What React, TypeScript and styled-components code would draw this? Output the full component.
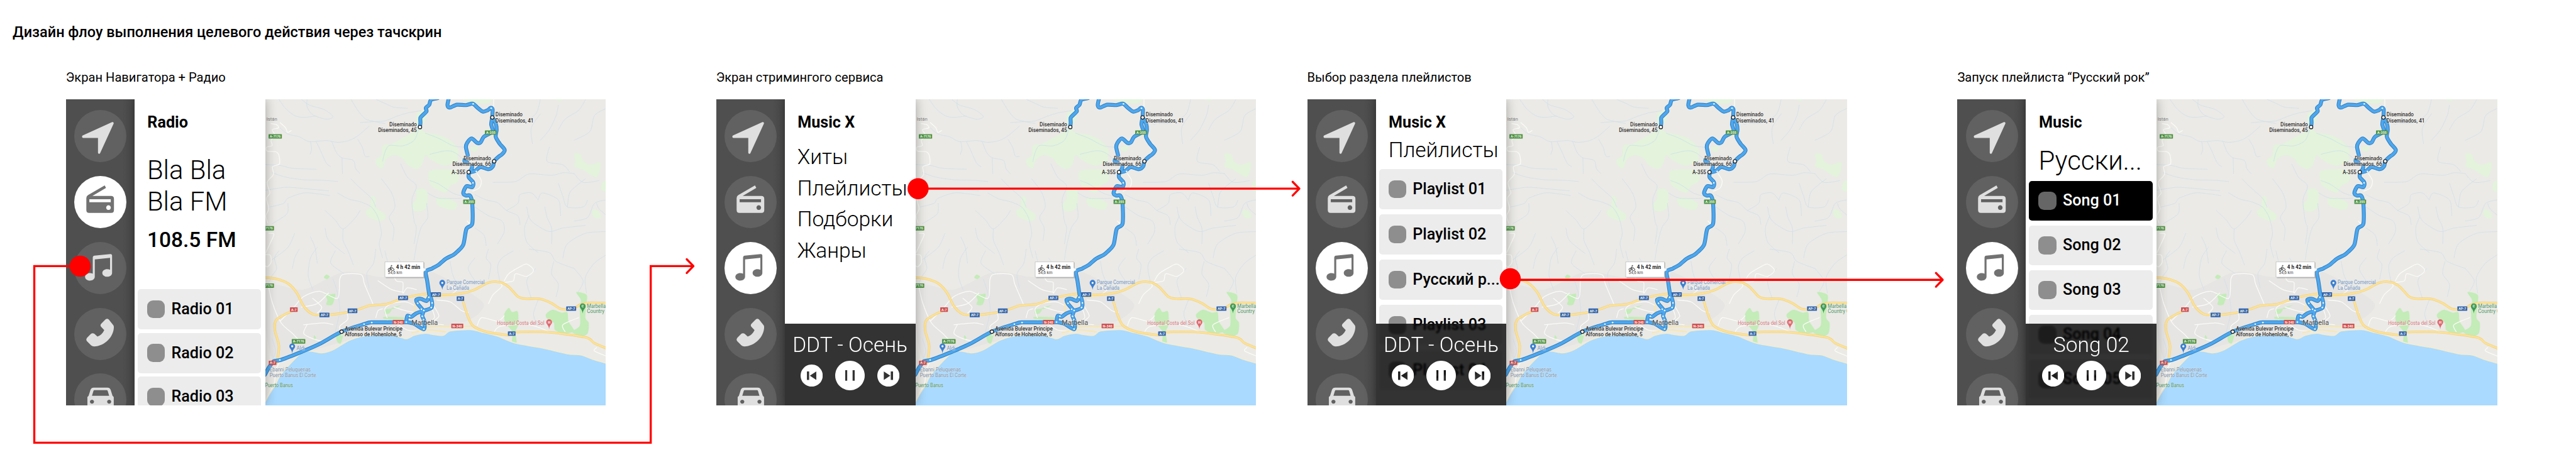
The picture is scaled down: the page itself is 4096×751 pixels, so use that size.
import React from "react";
import styled, { createGlobalStyle, css } from "styled-components";

const GlobalStyle = createGlobalStyle`
  html, body { margin: 0; padding: 0; background: #fff; overflow: hidden; }
  * { box-sizing: border-box; }
`;

/* ---------- board ---------- */

const Board = styled.main`
  position: relative;
  zoom: 0.838485;
  width: 4885px;
  height: 895.6px;
  padding-top: 44.3px;
  overflow: hidden;
  background: #fff;
  color: #000;
  font-family: Roboto, "Liberation Sans", sans-serif;
`;

const BoardTitle = styled.h1`
  margin: 0 0 53.5px 24px;
  font-size: 28px;
  line-height: 34px;
  font-weight: 500;
`;

const Flow = styled.div`
  display: flex;
  padding-left: 125px;
`;

const Step = styled.section<{ $before?: number }>`
  flex: none;
  width: 1024px;
  margin-left: ${(p) => p.$before ?? 0}px;
`;

const Caption = styled.h2`
  margin: 0 0 27.2px;
  font-size: 24px;
  line-height: 30px;
  font-weight: 400;
  white-space: nowrap;
`;

const Screen = styled.div`
  display: flex;
  height: 580px;
  overflow: hidden;
`;

/* ---------- sidebar ---------- */

const Sidebar = styled.nav`
  flex: none;
  width: 130px;
  height: 580px;
  padding: 20px 0 0 16px;
  display: flex;
  flex-direction: column;
  gap: 26px;
  overflow: hidden;
  background: linear-gradient(to right, #4f4f4f 108px, #4b4b4b 122px, #454545 130px);
`;

const NavButton = styled.div<{ $active?: boolean }>`
  flex: none;
  width: 99px;
  height: 99px;
  border-radius: 50%;
  background: ${(p) => (p.$active ? "#fff" : "#616161")};
  color: ${(p) => (p.$active ? "#727272" : "#dfdfdf")};
`;

const NavIcon = styled.svg`
  display: block;
  width: 99px;
  height: 99px;
  fill: currentColor;
`;

const icons: Record<string, React.ReactNode> = {
  navigate: (
    <path
      d="M17 50.2 72.8 25 47.2 81V51H17Z"
      stroke="currentColor"
      strokeWidth="4.2"
      strokeLinejoin="round"
    />
  ),
  radio: (
    <path
      fillRule="evenodd"
      d="M34.5 38H70Q75.4 38 75.4 43.4V64.6Q75.4 70 70 70H28.4Q23 70 23 64.6V42Q23 38.5 26 36.5L57.8 18 60.3 22.6ZM28.7 44V49.8H69.3V44ZM65 55.6a4.4 4.4 0 1 0 .01 0Z"
    />
  ),
  music: (
    <path
      fillRule="evenodd"
      d="M39 33V66C39 70.3 35 73.4 29.8 73.4S20.6 70.3 20.6 66.2 24.700 59 29.800 59Q33 59 35.200 60.200V30Q35.200 26.400 38.500 26L68.500 23Q71.800 22.800 71.800 26V58.700C71.800 62.900 67.700 66 62.500 66S53.300 62.800 53.300 58.700 57.400 51.500 62.500 51.500Q65.800 51.500 68 52.700V30Z"
    />
  ),
  phone: (
    <path d="M74.2 32.800 65.700 22.200Q62.400 19 59 22.200L51.300 29.800Q48.400 33 51.300 36.200L57 42Q52.500 51.500 44 54.300L38.500 49.200Q35 46.600 31.600 49.200L24.300 56.700Q21.600 60 24.300 63.300L32 71Q34.500 73.200 38 73.100C57 72.500 74.800 56 75.200 36.500Q75.200 34 74.200 32.800Z" />
  ),
  car: (
    <path
      fillRule="evenodd"
      d="M37 27H63Q67.500 27 69 31L72.700 42.500 75 45V75H25V45L27.300 42.500 31 31Q32.500 27 37 27ZM38.500 32Q37 32 36.500 33.500L33.700 42.500H66.300L63.500 33.500Q63 32 61.500 32ZM33.700 50a3.800 3.800 0 1 0 .01 0ZM66.300 50a3.800 3.800 0 1 0 .01 0Z"
    />
  ),
};

const NavBar = ({ active }: { active: string }) => (
  <Sidebar>
    {Object.keys(icons).map((name) => (
      <NavButton key={name} $active={name === active}>
        <NavIcon viewBox="0 0 99 99">{icons[name]}</NavIcon>
      </NavButton>
    ))}
  </Sidebar>
);

/* ---------- side panel ---------- */

const Panel = styled.div`
  position: relative;
  z-index: 1;
  flex: none;
  width: 248px;
  height: 580px;
  padding-top: 25.5px;
  overflow: hidden;
  background: #fff;
`;

const PanelShadow = styled.div`
  position: relative;
  z-index: 1;
  flex: none;
  width: 248px;
  height: 580px;
  box-shadow: 0 0 20px rgba(0, 0, 0, 0.3);
`;

const PanelHeading = styled.h3`
  margin: 0 0 0 24.5px;
  font-size: 30px;
  line-height: 36px;
  font-weight: 700;
`;

const Station = styled.p`
  margin: 43.400px 0 0 24px;
  width: 170px;
  font-size: 50px;
  line-height: 58.700px;
  font-weight: 300;
`;

const Frequency = styled.p`
  margin: 20.300px 0 69.400px 24px;
  font-size: 40px;
  line-height: 48px;
  font-weight: 500;
`;

const Section = styled.p<{ $large?: boolean }>`
  margin: ${(p) => (p.$large ? "24.8px 0 9px 24px" : "10.8px 0 11.7px 24px")};
  font-size: ${(p) => (p.$large ? 50 : 40)}px;
  line-height: ${(p) => (p.$large ? 58.7 : 48)}px;
  font-weight: 300;
  white-space: nowrap;
`;

const Menu = styled.ul`
  margin: 18px 0 0 24px;
  padding: 0;
  list-style: none;
  font-size: 40px;
  line-height: 59px;
  font-weight: 300;
`;

const List = styled.div<{ $gap: number }>`
  display: flex;
  flex-direction: column;
  gap: ${(p) => p.$gap}px;
  margin-left: 6px;
`;

const Item = styled.div<{ $selected?: boolean }>`
  flex: none;
  display: flex;
  align-items: center;
  gap: 12px;
  width: 234px;
  height: 76px;
  padding-left: 18px;
  border-radius: 6px;
  background: #ececec;
  font-size: 30px;
  line-height: 36px;
  font-weight: 500;
  white-space: nowrap;
  ${(p) =>
    p.$selected &&
    css`
      background: #000;
      color: #fff;
    `}
`;

const Cover = styled.span<{ $selected?: boolean }>`
  flex: none;
  width: 34px;
  height: 34px;
  border-radius: 11px;
  background: ${(p) => (p.$selected ? "#666" : "#8e8e8e")};
`;

const Tracks = ({ names, gap, selected }: { names: string[]; gap: number; selected?: number }) => (
  <List $gap={gap}>
    {names.map((name, i) => (
      <Item key={name} $selected={i === selected}>
        <Cover $selected={i === selected} />
        {name}
      </Item>
    ))}
  </List>
);

/* ---------- player ---------- */

const PlayerBox = styled.div`
  position: absolute;
  left: 0;
  right: 0;
  bottom: 0;
  height: 155px;
  padding-top: 16.600px;
  background: rgba(0, 0, 0, 0.8);
  backdrop-filter: blur(2px);
  color: #fff;
  text-align: center;
`;

const NowPlaying = styled.div`
  font-size: 40px;
  line-height: 48px;
  font-weight: 300;
  white-space: nowrap;
`;

const Controls = styled.div`
  display: flex;
  justify-content: center;
  align-items: center;
  gap: 24px;
  margin-top: 6.400px;
`;

const Control = styled.svg<{ $size: number }>`
  display: block;
  width: ${(p) => p.$size}px;
  height: ${(p) => p.$size}px;
  fill: #fff;
  fill-rule: evenodd;
`;

const Player = ({ track }: { track: string }) => (
  <PlayerBox>
    <NowPlaying>{track}</NowPlaying>
    <Controls>
      <Control $size={42} viewBox="0 0 42 42">
        <path d="M21 0a21 21 0 1 0 .01 0ZM12 13V29.300H16.200V13ZM29.800 13V29.300L17.500 21.200Z" />
      </Control>
      <Control $size={56} viewBox="0 0 56 56">
        <path d="M28 0a28 28 0 1 0 .01 0ZM19 18V38H22.800V18ZM33 18V38H37V18Z" />
      </Control>
      <Control $size={42} viewBox="0 0 42 42">
        <path d="M21 0a21 21 0 1 0 .01 0ZM12.300 13V29.300L24.600 21.200ZM25.500 13V29.300H29.800V13Z" />
      </Control>
    </Controls>
  </PlayerBox>
);

/* ---------- map ---------- */

// Map data is kept on a survey grid: 2.34 units per pixel across, 3 per pixel down.
const gx = (x: number) => (x - 30) / 2.34;
const gy = (y: number) => (y - 27) / 3;

const parse = (s: string, dy = 0) =>
  s.split(" ").map((p) => {
    const [x, y] = p.split(",").map(Number);
    return [gx(x), gy(y + dy)];
  });

const curve = (s: string, dy = 0, closed = false) => {
  const p = parse(s, dy);
  const n = p.length;
  const at = (i: number) => (closed ? p[(i + n) % n] : p[Math.max(0, Math.min(n - 1, i))]);
  let d = `M${p[0][0].toFixed(1)} ${p[0][1].toFixed(1)}`;
  for (let i = 0; i < (closed ? n : n - 1); i++) {
    const [a, b, c, e] = [at(i - 1), at(i), at(i + 1), at(i + 2)];
    const k = 7;
    d += `C${[
      b[0] + (c[0] - a[0]) / k, b[1] + (c[1] - a[1]) / k,
      c[0] - (e[0] - b[0]) / k, c[1] - (e[1] - b[1]) / k,
      c[0], c[1],
    ].map((v) => v.toFixed(1)).join(" ")}`;
  }
  return closed ? d + "Z" : d;
};

const SOUTH = 870;
const north = (list: string[], closed = false) => list.map((s) => curve(s, 0, closed)).join("");
const south = (list: string[], closed = false) => list.map((s) => curve(s, SOUTH, closed)).join("");

const coast =
  "28,880 50,830 75,780 90,740 120,690 190,600 230,590 280,600 330,583 400,530 450,508 520,495 600,500 655,520 690,500 740,488 770,495 820,500 850,475 940,468 1000,485 1060,505 1140,545 1250,570 1370,605 1430,612 1490,640 1545,660";
const sea = curve(coast, SOUTH) + "V600H-5Z";

const woods = north(
  [
    "715,190 740,215 800,230 850,260 885,310 880,350 830,370 770,375 740,345 725,400 700,425 660,400 640,365 600,345 565,370 550,420 525,405 520,370 545,345 550,290 590,280 640,245 690,210",
    "790,340 830,325 880,345 880,380 830,405 790,390 760,360",
    "755,440 800,425 870,430 890,470 880,500 850,520 830,560 790,540 760,510",
    "700,545 730,535 750,560 745,640 720,665 690,660 680,630 700,590",
    "790,590 840,590 880,620 870,655 830,650 795,630",
    "500,580 520,590 520,640 560,680 560,710 530,720 485,695 475,665 495,640",
    "1400,335 1430,340 1440,375 1470,400 1515,385 1515,430 1500,470 1470,455 1440,430 1400,410 1405,380",
    "1525,500 1545,490 1545,550 1520,540",
    "1485,655 1510,665 1520,700 1495,705 1480,680",
    "905,24 1030,24 1015,50 950,45",
    "940,300 975,295 965,325 945,320",
    "700,110 740,90 740,150 705,180",
    "1310,24 1345,24 1335,38",
  ],
  true
);

const parks = south(
  [
    "295,262 315,268 340,265 335,300 325,328 300,325 305,300",
    "300,155 315,165 305,180 290,172",
    "560,355 590,350 580,375 560,378",
    "590,345 635,328 600,350",
    "1090,380 1110,345 1125,368 1150,365 1152,440 1140,480 1145,545 1125,540 1125,480 1095,430",
    "1275,380 1305,355 1345,372 1370,370 1375,420 1395,460 1400,480 1355,490 1315,470 1310,430 1280,405",
    "1410,255 1455,270 1455,320 1450,400 1465,430 1460,490 1430,505 1390,480 1425,445 1425,350 1430,300",
    "345,500 375,490 365,545 350,540",
    "245,500 255,515 245,530",
    "560,395 640,398 640,410 560,408",
  ],
  true
);

const streams =
  north([
    "90,27 120,80 160,120 200,130 255,122",
    "190,27 225,60 290,85 330,125 300,140 240,115 215,70 215,27",
    "410,27 440,90 470,135 500,150 560,165",
    "520,27 560,50 600,72 660,78",
    "720,92 660,105 610,125 560,150 500,155 450,160",
    "95,190 130,225 180,240 225,268 300,262 350,272 400,262 440,235 490,180",
    "230,268 235,310 228,340",
    "255,268 275,320 300,390 320,410",
    "325,268 345,330 370,360 420,375 430,420 450,450",
    "370,360 372,450",
    "440,255 460,300 472,350 490,352",
    "550,380 560,330 580,290 640,292 690,260 712,190",
    "30,398 100,405 150,420 255,425",
    "60,445 120,470 200,485 285,488 350,495",
    "30,545 120,528 200,535 310,548",
    "50,640 110,620 130,590 200,560 260,565 315,575",
    "130,620 125,680 60,735",
    "350,560 400,595 450,610 500,640 530,700 545,790 535,850 550,930",
    "410,480 440,520 500,590 520,640",
    "295,660 340,715 375,765 430,700 450,660",
    "295,760 310,830 380,905",
    "375,765 375,830 400,900 420,970",
    "230,810 250,870 260,960",
    "160,790 130,870 60,940",
    "545,480 590,560 605,640 580,700 600,760 595,830",
    "630,395 660,470 700,520 680,600 690,720 700,760 690,850",
    "745,620 750,700 720,760 700,860 690,940",
    "760,490 800,510 860,560 910,580",
    "750,560 800,590 900,590",
    "760,340 830,320 870,330 910,370",
    "740,220 800,250 860,290 910,300",
    "1120,130 1090,170 1070,150",
    "1250,27 1230,110 1170,160 1110,165",
    "1330,60 1320,120 1290,200 1250,260",
    "1450,30 1420,90 1360,140 1330,200",
    "1540,80 1490,120 1470,210 1400,260",
    "1250,110 1210,190 1215,280",
    "1040,500 1140,495 1200,452 1300,460 1350,445 1400,450",
    "1290,300 1280,380 1350,400 1380,440",
    "960,570 1010,600 1060,615 1100,660 1150,690 1160,740",
    "960,640 1020,690 1080,720 1090,780 1060,850",
    "1100,660 1150,620 1160,570 1210,560 1240,600",
    "1240,600 1260,560 1330,600 1340,690",
    "1190,640 1200,700 1230,740 1290,780 1350,760 1450,745",
    "1270,640 1280,700 1300,760 1300,850",
    "1330,505 1350,580 1370,640 1440,640 1460,600",
    "1450,480 1410,520 1380,560 1370,640",
    "1540,600 1490,620 1460,700 1400,720",
    "1545,780 1450,790 1370,850 1350,930",
    "1200,690 1180,760 1190,840 1240,900",
    "960,760 1000,800 1010,860",
    "1545,690 1510,650 1500,620",
    "1400,450 1440,500 1510,490",
  ]) +
  south([
    "90,20 70,60 80,120 60,160 45,200",
    "180,10 160,60 150,120",
    "260,0 230,60 220,160 240,240",
    "340,20 320,90 380,150",
    "520,10 510,90 480,150 490,230",
    "560,20 580,110 620,160",
    "620,60 660,130 700,170",
    "850,80 860,150 880,200 930,230",
    "960,60 930,120 960,190",
    "1020,10 1010,60 1030,100 1020,180",
    "1130,20 1080,60 1060,110 1070,190",
    "1200,10 1290,30 1320,80 1400,120",
    "1310,80 1300,150 1330,210 1320,280",
    "1545,40 1490,90 1450,170 1455,260",
    "1400,120 1440,190 1420,250",
    "1230,120 1190,190 1210,290",
    "60,520 75,590 60,640",
    "1240,300 1220,380 1240,450",
    "330,180 350,260 360,360 340,480",
  ]);

const streets =
  north([
    "55,165 80,172 88,190 60,200 75,235 55,260 60,290 35,300 38,322 75,325 90,345 92,395 62,410 65,455 38,500 50,560 35,590 45,650 32,690 40,730",
    "95,160 120,190 128,215 145,205",
    "1043,24 1043,75",
    "970,450 988,490 980,530 950,550",
    "925,720 940,740",
    "45,790 68,795 50,850 32,900",
  ]) +
  south([
    "30,40 52,45 55,85 40,110 30,105",
    "45,230 62,320 100,430 150,490 180,530",
    "95,420 150,350 200,280 270,250 350,290 360,180 380,152 455,155 470,210 510,330",
    "190,340 260,320 310,260",
    "240,290 280,340 260,375",
    "390,360 395,410 360,450 370,500",
    "215,440 200,490 240,520 300,540",
    "590,130 610,190 640,200 640,260 660,230 700,240",
    "530,190 590,240 640,255",
    "1060,190 1080,220 1040,270 1020,320",
    "1090,190 1110,150 1160,110 1190,95 1220,130 1190,165 1140,150 1130,190 1090,200",
    "570,400 560,350 590,320 650,310 690,330",
    "520,400 530,360 550,350",
    "600,340 650,360 690,370",
    "790,300 850,310 900,360 930,370",
    "770,320 800,390 770,430 820,440",
    "750,430 780,400 770,350",
    "970,445 990,400 1060,420 1090,390",
    "1040,500 1070,450 1200,440 1290,480",
    "1360,480 1350,440 1420,400",
    "1500,570 1490,590 1545,620",
    "200,440 290,430 330,440",
    "100,640 75,700 70,770 35,860",
    "850,270 880,240 850,220",
    "570,415 620,440 660,470 720,480",
  ]);

const highways = south([
  "25,172 75,178 130,205 170,260 200,335 240,380 290,385 370,375 450,350 490,332 570,322 640,290 740,265 820,270 900,262 960,240 1020,200 1070,198 1110,225 1150,280 1180,292 1250,293 1300,318 1340,350 1390,352 1430,325 1480,315 1550,318",
  "82,655 90,560 72,470 80,410 150,360",
  "902,285 925,380 950,445 1010,480 1110,500",
  "1145,482 1280,482 1450,512 1490,545 1550,578",
]);
const arterials = south(["735,448 850,450 945,448", "780,262 700,310 690,370", "740,265 780,285 870,270", "680,485 750,470 830,480"]);

const route =
  north([
    "795,20 765,30 757,58 742,76 745,95 730,115 718,132 718,160 716,185",
    "845,15 838,60 848,74 880,58 920,60 950,52 972,76 995,97 1015,90 1030,76 1038,84 1037,130",
    "1037,130 1052,165 1056,200 1052,240 1070,280 1092,315 1080,340 1064,355 1045,380 1040,408 1020,425 985,412 960,435 940,442",
    "1037,130 1032,170 1038,210 1000,240 985,272 970,275 945,250 925,275 920,300 928,345",
    "914,372 914,382 926,385",
    "948,405 945,425 935,442 932,470 952,500 948,527 922,522 908,560 920,575 938,575 948,620 948,735 922,765 908,855 880,896 865,912 830,935 800,968 770,990 742,1008 748,1060 757,1140",
  ]) +
  south([
    "757,265 765,290 770,320 766,345 735,360 700,375 678,395 660,390 655,425",
    "755,285 745,305 720,293 700,298 705,320 730,360 726,390 735,420 733,466 690,435 655,425",
    "655,425 580,427 500,427 468,437 368,480 270,550 190,595 100,640 68,648 45,685 28,725",
  ]);

type Box = [string, number, number, number, number];
const shields: { fill: string; list: Box[] }[] = [
  {
    fill: "#4f9444",
    list: [
      ["A-7176", 44, 226, 103, 251],
      ["A-355", 1004, 204, 1056, 228],
      ["A-355", 908, 598, 960, 623],
      ["7176", 24, 749, 68, 774],
      ["7176", 24, 1075, 68, 1100],
      ["A-7176", 147, 1392, 207, 1418],
    ],
  },
  {
    fill: "#3565ad",
    list: [
      ["AP-7", 619, 1145, 663, 1170],
      ["AP-7", 764, 1125, 809, 1151],
      ["AP-7", 270, 1242, 314, 1268],
      ["AP-7", 395, 1218, 438, 1244],
      ["AP-7", 1365, 1206, 1409, 1231],
      ["A-7", 879, 1149, 912, 1175],
      ["A-7", 1106, 1348, 1140, 1373],
    ],
  },
  {
    fill: "#d24e50",
    list: [
      ["A-7", 139, 1211, 173, 1237],
      ["N-340", 595, 1283, 645, 1308],
      ["N-340", 855, 1304, 908, 1330],
      ["A-7", 45, 1515, 79, 1540],
    ],
  },
];

type Label = [string, number, number, number];
const DARK = "#2f2f2f";
const labels: { fill: string; size: number; weight: number; list: Label[] }[] = [
  {
    fill: DARK, size: 10.4, weight: 500,
    list: [
      ["Diseminado", 580, 702, 180],
      ["Diseminados, 45", 530, 702, 213],
      ["Diseminado", 1051, 1171, 125],
      ["Diseminados, 41", 1051, 1220, 158],
      ["Diseminado", 910, 1031, 374],
      ["Diseminados, 66", 860, 1031, 407],
      ["A-355", 856, 917, 453],
      ["Avenida Bulevar Principe", 382, 638, 1344],
      ["Alfonso de Hohenlohe, 5", 382, 635, 1377],
    ],
  },
  { fill: "#7d7d7d", size: 9.5, weight: 400, list: [["Istán", 35, 82, 150]] },
  { fill: "#4a4a4a", size: 12, weight: 400, list: [["Marbella", 678, 795, 1312]] },
  {
    fill: "#6f93c4", size: 10.4, weight: 400,
    list: [
      ["Parque Comercial", 834, 1003, 1080],
      ["La Cañada", 834, 934, 1112],
      ["Aldi", 168, 205, 1453],
    ],
  },
  {
    fill: "#7f93ab", size: 10.4, weight: 400,
    list: [
      ["Ebanni Peluquerias", 49, 231, 1577],
      ["Puerto Banus El Corte.", 49, 260, 1609],
    ],
  },
  { fill: "#d9777f", size: 10.4, weight: 400, list: [["Hospital Costa del Sol", 1058, 1268, 1313]] },
  {
    fill: "#4d9463", size: 10.4, weight: 400,
    list: [
      ["Marbella", 1457, 1540, 1214],
      ["Country Club", 1457, 1584, 1245],
      ["Puerto Banus", 28, 152, 1664],
    ],
  },
];

const stops = ["716,185", "1037,130", "1045,380", "932,442", "368,1350"];
const dots =
  "952,53 1032,78 966,438 951,503 755,1154 770,1186 766,1212 706,1188 722,1222 733,1229 726,1262 731,1282 733,1335 655,1295 670,1262 502,1298 468,1307 94,1511";

const MapSvg = styled.svg`
  display: block;
  flex: none;
  width: 646px;
  height: 580px;
  background: #ebeae6;
  font-family: Roboto, "Liberation Sans", sans-serif;
  fill: none;
  stroke-linecap: round;
  stroke-linejoin: round;
`;

const Pin = ({ x, y, color, mark }: { x: number; y: number; color: string; mark: string }) => (
  <g transform={`translate(${gx(x)} ${gy(y)})`}>
    <path d="M0 8C-1-1-5.500-1-5.500-5.500a5.500 5.500 0 0 1 11 0C5.500-1 1-1 0 8Z" fill={color} />
    <text y="-3" fontSize="6.500" fontWeight="700" textAnchor="middle" fill="#fff">{mark}</text>
  </g>
);

const RouteMap = () => (
  <MapSvg viewBox="0 0 646 580">
    <path d={curve("30,1100 200,1110 380,1010 560,1040 740,1000 900,1100 1000,1200 900,1300 600,1350 400,1400 200,1470 60,1500", 0, true)} fill="#e6e5e3" />
    <path d={woods} fill="#e3f3dc" />
    <path d={parks} fill="#c3ecb8" />
    <path d={streams} stroke="#cfdfea" strokeWidth="1" />
    <path d={streets} stroke="#fbfbf9" strokeWidth="1.500" />
    <path d={sea} fill="#aadaff" />
    <path d={curve(coast, SOUTH)} stroke="#f3ecd0" strokeWidth="2.200" />
    <path d={arterials} stroke="#f8e7ae" strokeWidth="2.400" />
    <path d={highways} stroke="#efcf86" strokeWidth="4.600" />
    <path d={highways} stroke="#fde293" strokeWidth="3.200" />
    <path d={route} stroke="#2f7fc3" strokeWidth="7.400" />
    <path d={route} stroke="#4da7ee" strokeWidth="5" />
    {dots.split(" ").map((p) => {
      const [x, y] = p.split(",").map(Number);
      return <circle key={p} cx={gx(x)} cy={gy(y)} r="1.500" fill="#f2faff" />;
    })}
    {shields.map(({ fill, list }) =>
      list.map(([text, x1, y1, x2, y2]) => (
        <g key={`${x1}-${y1}`}>
          <rect x={gx(x1)} y={gy(y1)} width={(x2 - x1) / 2.34} height={(y2 - y1) / 3} rx="0.800" fill={fill} />
          <text
            x={gx((x1 + x2) / 2)}
            y={gy(y2) - 1.800}
            fontSize="6.800"
            fontWeight="700"
            textAnchor="middle"
            fill="#eef5ee"
            textLength={(x2 - x1) / 2.34 - 4.500}
            lengthAdjust="spacingAndGlyphs"
          >
            {text}
          </text>
        </g>
      ))
    )}
    {labels.map(({ fill, size, weight, list }) =>
      list.map(([text, x1, x2, y]) => (
        <text
          key={`${x1}-${y}`}
          x={gx(x1)}
          y={gy(y)}
          fontSize={size}
          fontWeight={weight}
          fill={fill}
          stroke="#f4f3f0"
          strokeWidth="1.200"
          strokeOpacity="0.500"
          paintOrder="stroke"
          textLength={(x2 - x1) / 2.34}
          lengthAdjust="spacingAndGlyphs"
        >
          {text}
        </text>
      ))
    )}
    {stops.map((p) => {
      const [x, y] = p.split(",").map(Number);
      return <circle key={p} cx={gx(x)} cy={gy(y)} r="3.300" fill="#fff" stroke="#222" strokeWidth="1.500" />;
    })}
    <Pin x={815} y={1088} color="#3b7fd1" mark="" />
    <circle cx={gx(815)} cy={gy(1072)} r="2" fill="#fff" />
    <Pin x={149} y={1450} color="#3b7fd1" mark="" />
    <circle cx={gx(149)} cy={gy(1433)} r="2" fill="#fff" />
    <Pin x={1438} y={1222} color="#3f9a55" mark="C" />
    <Pin x={1289} y={1312} color="#e0686e" mark="H" />
    <rect x="228.500" y="309.500" width="73" height="30" fill="#8f8f8f" fillOpacity="0.550" />
    <rect x="227" y="308.500" width="73" height="29" fill="#fff" stroke="#b9b9b9" strokeWidth="0.800" />
    <path d="M299.500 320 305 323.500 299.500 327Z" fill="#fff" />
    <g stroke="#444" strokeWidth="1.100">
      <circle cx="235" cy="323" r="2.400" />
      <circle cx="241.500" cy="323" r="2.400" />
      <path d="M235 323 237.500 318 241 319.500M238 322V319" />
      <circle cx="239" cy="315.800" r="0.700" />
    </g>
    <text x={gx(610)} y="322.500" fontSize="10.400" fontWeight="700" fill="#222" textLength="45.500" lengthAdjust="spacingAndGlyphs">4 h 42 min</text>
    <text x={gx(573)} y="331.800" fontSize="7.600" fill="#444" textLength="27.500" lengthAdjust="spacingAndGlyphs">54,6 km</text>
  </MapSvg>
);

/* ---------- connectors ---------- */

const Connectors = styled.svg`
  position: absolute;
  left: 0;
  top: 0;
  z-index: 2;
  width: 4885px;
  height: 896px;
  fill: none;
  stroke: #f00;
  stroke-width: 4px;
`;

const links = [
  { x: 152, y: 505, path: "M152 505H65V840H1234V505H1315", tip: [1315, 505] },
  { x: 1741, y: 358, path: "M1741 358H2464", tip: [2464, 358] },
  { x: 2864, y: 529, path: "M2864 531H3684", tip: [3684, 531] },
];

const App = () => (
  <>
    <GlobalStyle />
    <Board>
      <BoardTitle>Дизайн флоу выполнения целевого действия через тачскрин</BoardTitle>
      <Flow>
        <Step>
          <Caption>Экран Навигатора + Радио</Caption>
          <Screen>
            <NavBar active="radio" />
            <PanelShadow>
              <Panel>
                <PanelHeading>Radio</PanelHeading>
                <Station>Bla Bla Bla FM</Station>
                <Frequency>108.5 FM</Frequency>
                <Tracks gap={7} names={["Radio 01", "Radio 02", "Radio 03"]} />
              </Panel>
            </PanelShadow>
            <RouteMap />
          </Screen>
        </Step>
        <Step $before={209}>
          <Caption>Экран стримингого сервиса</Caption>
          <Screen>
            <NavBar active="music" />
            <PanelShadow>
              <Panel>
                <PanelHeading>Music X</PanelHeading>
                <Menu>
                  <li>Хиты</li>
                  <li>Плейлисты</li>
                  <li>Подборки</li>
                  <li>Жанры</li>
                </Menu>
                <Player track="DDT - Осень" />
              </Panel>
            </PanelShadow>
            <RouteMap />
          </Screen>
        </Step>
        <Step $before={97}>
          <Caption>Выбор раздела плейлистов</Caption>
          <Screen>
            <NavBar active="music" />
            <PanelShadow>
              <Panel>
                <PanelHeading>Music X</PanelHeading>
                <Section>Плейлисты</Section>
                <Tracks gap={10} names={["Playlist 01", "Playlist 02", "Русский р...", "Playlist 03", "Playlist 04"]} />
                <Player track="DDT - Осень" />
              </Panel>
            </PanelShadow>
            <RouteMap />
          </Screen>
        </Step>
        <Step $before={209}>
          <Caption>Запуск плейлиста “Русский рок”</Caption>
          <Screen>
            <NavBar active="music" />
            <PanelShadow>
              <Panel>
                <PanelHeading>Music</PanelHeading>
                <Section $large>Русски...</Section>
                <Tracks gap={8.7} selected={0} names={["Song 01", "Song 02", "Song 03", "Song 04", "Song 05"]} />
                <Player track="Song 02" />
              </Panel>
            </PanelShadow>
            <RouteMap />
          </Screen>
        </Step>
      </Flow>
      <Connectors viewBox="0 0 4885 896">
        {links.map(({ x, y, path, tip: [tx, ty] }) => (
          <g key={path}>
            <path d={path} />
            <path d={`M${tx - 12.700} ${ty - 13}L${tx} ${ty}L${tx - 12.700} ${ty + 13}`} strokeLinecap="round" strokeLinejoin="round" />
            <circle cx={x} cy={y} r="20" fill="#f00" stroke="none" />
          </g>
        ))}
      </Connectors>
    </Board>
  </>
);

export default App;
